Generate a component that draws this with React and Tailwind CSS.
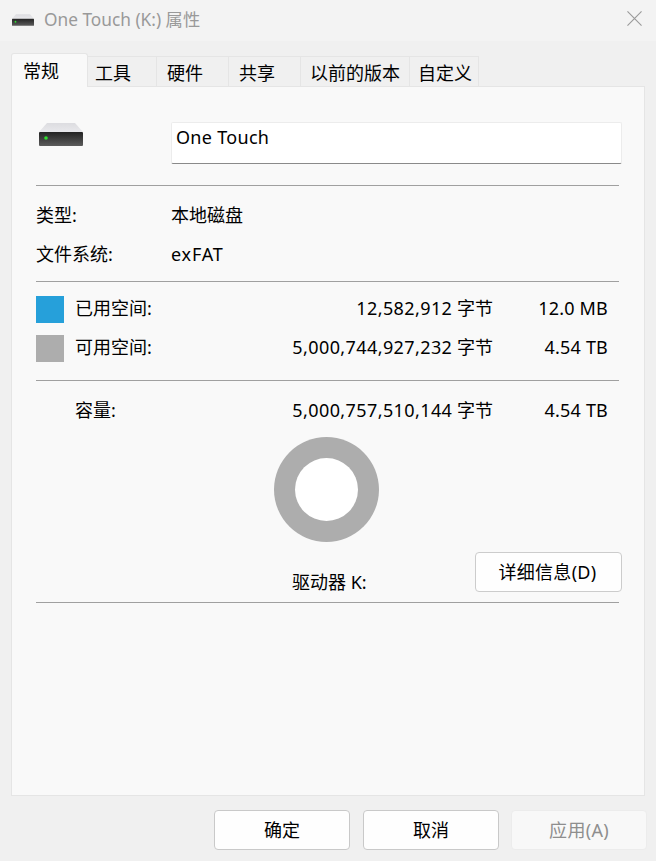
const tabs = [
    { label: '工具', w: 'w-[69px] pl-[7px]' },
    { label: '硬件', w: 'w-[72px] pl-[10px]' },
    { label: '共享', w: 'w-[72px] pl-[10px]' },
    { label: '以前的版本', w: 'w-[109px] pl-[9px]' },
    { label: '自定义', w: 'w-[69px] pl-[8px]' },
]

function DriveIcon({ className }) {
    return (
        <svg viewBox="0 0 44 23" className={className}>
            <defs>
                <linearGradient id="driveTop" x1="0" y1="0" x2="0" y2="1">
                    <stop offset="0" stopColor="#dcdce0" />
                    <stop offset="1" stopColor="#e9e9ec" />
                </linearGradient>
                <linearGradient id="driveFront" x1="0" y1="0" x2="0" y2="1">
                    <stop offset="0" stopColor="#232323" />
                    <stop offset="1" stopColor="#5c5c5c" />
                </linearGradient>
            </defs>
            <path d="M8 0H36L44 9H0Z" fill="url(#driveTop)" />
            <rect x="0" y="9" width="44" height="14" rx="1" fill="url(#driveFront)" />
            <circle cx="7" cy="15" r="1.8" fill="#2fe02f" />
        </svg>
    )
}

function Divider() {
    return <div className="h-px bg-[#a0a0a0]" />
}

function UsageRow({ swatch, label, bytes, size, className }) {
    return (
        <div className={`flex items-center h-[27px] ${className}`}>
            <div className={`w-[28px] h-[27px] shrink-0 ${swatch}`} />
            <span className="ml-[11px] w-[130px] pb-[2px]">{label}</span>
            <span className="w-[288px] text-right pb-[2px]">
                <span className="tracking-[0.4px]">{bytes}</span> 字节
            </span>
            <span className="w-[115px] text-right pb-[2px] tracking-[0.2px]">{size}</span>
        </div>
    )
}

function DialogButton({ children, disabled, className }) {
    return (
        <button
            type="button"
            disabled={disabled}
            className={`h-[40px] w-[136px] rounded-[4px] border text-[18px] ${disabled ? 'border-[#ececec] bg-[#f8f8f8] text-[#8e8e8e] tracking-[0.3px]' : 'border-[#c9c9c9] bg-[#fefefe] text-black'} ${className}`}
        >
            {children}
        </button>
    )
}

export default function App() {
    return (
        <div className="w-[656px] h-[861px] flex flex-col bg-[#f0f0f0] text-[18px] text-black font-['Noto_Sans','Noto_Sans_CJK_SC',sans-serif] overflow-hidden">
            <div className="h-[41px] shrink-0 bg-[#f3f3f3] flex items-center pl-[12px] pr-[14px]">
                <DriveIcon className="w-[22px] h-[12px] shrink-0 mb-[2px]" />
                <span className="ml-[10px] pb-[2px] text-[17.3px] text-[#999999]">One Touch (K:) 属性</span>
                <svg viewBox="0 0 16 16" className="ml-auto mb-[5px] w-[15px] h-[15px] text-[#9a9a9a]">
                    <path d="M0.5 0.5L15.5 15.5M15.5 0.5L0.5 15.5" stroke="currentColor" strokeWidth="1.2" fill="none" />
                </svg>
            </div>

            <div className="ml-[11px] mt-[12px] flex items-end h-[33px] shrink-0">
                <div className="relative z-10 w-[77px] h-[34px] -mb-px bg-[#f9f9f9] border border-b-0 border-[#e5e5e5] rounded-t-[3px] pl-[11px] pt-[4px]">
                    常规
                </div>
                {tabs.map((tab) => (
                    <div key={tab.label} className={`${tab.w} h-[30px] border-t border-r border-[#e5e5e5] bg-[#f0f0f0] leading-[32px]`}>
                        {tab.label}
                    </div>
                ))}
            </div>

            <div className="ml-[11px] w-[634px] h-[710px] shrink-0 border border-[#e5e5e5] bg-[#f9f9f9] pl-[24px]">
                <div className="w-[583px]">
                    <div className="flex h-[98px] pt-[35px]">
                        <DriveIcon className="ml-[3px] mt-[1px] w-[44px] h-[23px] shrink-0" />
                        <div className="ml-[88px] w-[451px] h-[42px] shrink-0 bg-white border border-[#ececec] border-b-[#8a8a8a] rounded-[2px] pl-[4px] leading-[28px] tracking-[0.3px]">
                            One Touch
                        </div>
                    </div>
                    <Divider />

                    <div className="flex items-center h-[24px] mt-[17px]">
                        <span className="w-[135px] shrink-0">类型:</span>
                        <span>本地磁盘</span>
                    </div>
                    <div className="flex items-center h-[24px] mt-[15px]">
                        <span className="w-[135px] shrink-0">文件系统:</span>
                        <span className="tracking-[0.8px]">exFAT</span>
                    </div>
                    <div className="mt-[15px]"><Divider /></div>

                    <UsageRow swatch="bg-[#26a0da]" label="已用空间:" bytes="12,582,912" size="12.0 MB" className="mt-[14px]" />
                    <UsageRow swatch="bg-[#adadad]" label="可用空间:" bytes="5,000,744,927,232" size="4.54 TB" className="mt-[12px]" />
                    <div className="mt-[18px]"><Divider /></div>

                    <UsageRow label="容量:" bytes="5,000,757,510,144" size="4.54 TB" className="mt-[17px]" />

                    <svg viewBox="0 0 105 105" className="ml-[238px] mt-[12px] w-[105px] h-[105px]">
                        <circle cx="52.5" cy="52.5" r="52.5" fill="#adadad" />
                        <circle cx="52.5" cy="52.5" r="31.5" fill="#ffffff" />
                    </svg>

                    <div className="flex h-[40px] mt-[10px]">
                        <span className="ml-[256px] w-[183px] shrink-0 pt-[17px]">驱动器 K:</span>
                        <button type="button" className="w-[147px] h-[40px] shrink-0 rounded-[4px] border border-[#cccccc] bg-[#fefefe] tracking-[0.3px] pr-[2px]">
                            详细信息(D)
                        </button>
                    </div>
                    <div className="mt-[10px]"><Divider /></div>
                </div>
            </div>

            <div className="flex pl-[214px] mt-[14px]">
                <DialogButton>确定</DialogButton>
                <DialogButton className="ml-[13px]">取消</DialogButton>
                <DialogButton disabled className="ml-[12px]">应用(A)</DialogButton>
            </div>
        </div>
    )
}
